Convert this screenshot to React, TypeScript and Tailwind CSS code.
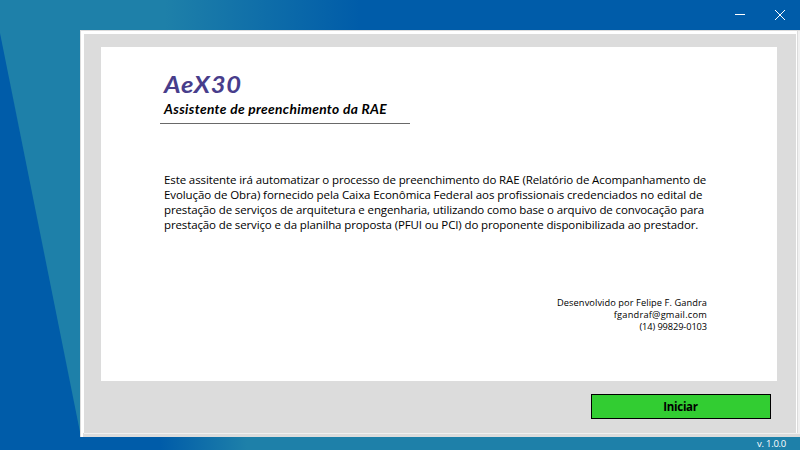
const body: { text: string; style: string }[] = [
  { text: "Este assitente irá automatizar o processo de preenchimento do RAE (Relatório de Acompanhamento de", style: "tracking-[-0.11px]" },
  { text: "Evolução de Obra) fornecido pela Caixa Econômica Federal aos profissionais credenciados no edital de", style: "tracking-[-0.09px]" },
  { text: "prestação de serviços de arquitetura e engenharia, utilizando como base o arquivo de convocação para", style: "tracking-[-0.125px]" },
  { text: "prestação de serviço e da planilha proposta (PFUI ou PCI) do proponente disponibilizada ao prestador.", style: "tracking-[-0.125px]" },
];

function TitleBar() {
  return (
    <header className="flex h-[30px] shrink-0 items-center justify-end gap-7 bg-[linear-gradient(90deg,#1e80a9_165px,#005ca9_360px)] pr-[14px]">
      <svg width="12" height="12" viewBox="0 0 12 12" shapeRendering="crispEdges" className="text-white">
        <rect x="1" y="5" width="10" height="1" fill="currentColor" />
      </svg>
      <svg width="12" height="12" viewBox="0 0 12 12" fill="none" stroke="white" strokeWidth="1">
        <path d="M1 1 L11 11 M11 1 L1 11" />
      </svg>
    </header>
  );
}

export default function App() {
  return (
    <div className="flex h-[450px] w-[800px] flex-col overflow-hidden bg-[#1e80a9] font-['Open_Sans',sans-serif] text-black">
      <TitleBar />
      <div className="flex h-[407px] shrink-0">
        <svg width="80" height="407" viewBox="0 0 80 407" className="shrink-0">
          <path d="M0 3 L80 402 V407 H0 Z" fill="#005ca9" />
        </svg>
        <main className="flex flex-1 border-t border-l border-[#dcdcdc] bg-[#dcdcdc]">
          <div className="flex flex-1 flex-col border-l-2 border-white">
            <div className="flex h-[402px] shrink-0">
              <div className="flex flex-1 flex-col border-t-[3px] border-r border-l border-white pt-[13px] pl-[17px]">
                <section className="flex h-[334px] w-[676px] shrink-0 flex-col bg-white pl-[59px]">
                  <div className="flex h-[77px] w-[250px] flex-col border-b border-[#696969] pl-1">
                    <h1 className="mt-[22px] h-[32px] w-fit origin-left scale-x-[1.16] whitespace-nowrap font-['Lato',sans-serif] text-[22px] leading-[32px] font-bold italic tracking-[0.6px] text-[#483d8b]">AeX30</h1>
                    <h2 className="h-[18px] w-fit origin-left scale-x-[1.1] whitespace-nowrap font-['Lato',sans-serif] text-[12.5px] leading-[18px] font-bold italic tracking-[0.3px]">Assistente de preenchimento da RAE</h2>
                  </div>
                  <div className="mt-[48px] flex flex-col pl-1 text-[11.5px] leading-[15px] whitespace-nowrap">
                    {body.map((l) => (
                      <span key={l.text} className={l.style}>{l.text}</span>
                    ))}
                  </div>
                  <div className="mt-[65px] mr-[70px] flex flex-col items-end text-[9.25px] leading-[12px] whitespace-nowrap">
                    <span className="tracking-[0.08px]">Desenvolvido por Felipe F. Gandra</span>
                    <span className="tracking-[0.22px]">fgandraf@gmail.com</span>
                    <span className="tracking-[-0.1px]">(14) 99829-0103</span>
                  </div>
                </section>
                <button className="mt-[13px] ml-[490px] flex h-[25px] w-[180px] shrink-0 items-center justify-center border border-black bg-[#32cd32] pr-px text-[11.5px] font-bold tracking-[-0.3px]">
                  Iniciar
                </button>
              </div>
              <div className="w-[3px] border-l border-[#dcdcdc] bg-[#f0f0f0]" />
            </div>
            <div className="ml-px h-px bg-[#f0f0f0]" />
          </div>
        </main>
      </div>
      <footer className="flex h-[13px] shrink-0 items-center justify-end bg-[linear-gradient(90deg,#005ca9_160px,#1e80a9_247px)] pr-[14px] text-[9.5px] leading-[13px] tracking-[-0.25px] text-white">
        v. 1.0.0
      </footer>
    </div>
  );
}
